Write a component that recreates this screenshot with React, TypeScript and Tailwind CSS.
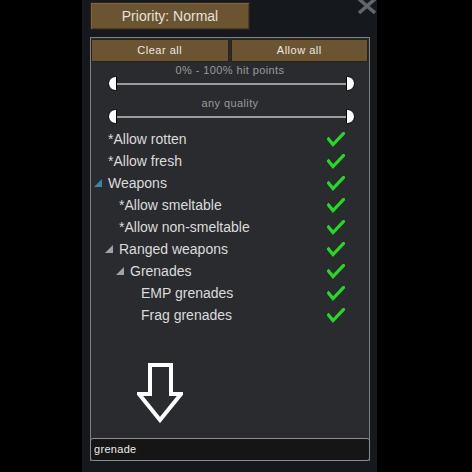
const rows = [
  { label: "*Allow rotten", level: 0, tri: "" },
  { label: "*Allow fresh", level: 0, tri: "" },
  { label: "Weapons", level: 0, tri: "blue" },
  { label: "*Allow smeltable", level: 1, tri: "" },
  { label: "*Allow non-smeltable", level: 1, tri: "" },
  { label: "Ranged weapons", level: 1, tri: "gray" },
  { label: "Grenades", level: 2, tri: "gray" },
  { label: "EMP grenades", level: 3, tri: "" },
  { label: "Frag grenades", level: 3, tri: "" },
]

const indent = ["pl-[3px]", "pl-[14px]", "pl-[25px]", "pl-[36px]"]

const Check = () => (
  <svg width="18" height="15" viewBox="0 0 18 15" className="ml-auto mr-[24px]">
    <polyline points="1.5,7 6,12.5 16.5,1.5" fill="none" stroke="#27d827" strokeWidth="3.2" strokeLinecap="square" />
  </svg>
)

const Slider = () => (
  <div className="flex items-center h-[15px] ml-[17px] mr-[14px]">
    <div className="w-[9px] h-[15px] bg-white rounded-l-full border border-black" />
    <div className="flex-1 h-[2px] bg-[#9c9c9c]" />
    <div className="w-[9px] h-[15px] bg-white rounded-r-full border border-black" />
  </div>
)

export default function App() {
  return (
    <div className="w-[472px] h-[472px] bg-black flex" style={{ fontFamily: '"Liberation Sans", Arial, sans-serif' }}>
      <div className="ml-[82px] w-[295px] h-full bg-[#15191e] relative">
        <svg width="18" height="14" viewBox="0 0 18 14" className="absolute right-[1px] top-0">
          <path d="M1 -1 L17 13 M17 -1 L1 13" stroke="#62656a" strokeWidth="3.5" />
        </svg>

        <div className="ml-[8px] mt-[2px] w-[160px] h-[28px] bg-[#6b5432] border border-[#2a2217] shadow-[inset_1px_1px_0_#7d6440,inset_-1px_-1px_0_#4e3d24] flex items-center justify-center text-[14px] text-[#e4e2dc]">
          Priority: Normal
        </div>

        <div className="ml-[8px] mt-[7px] w-[280px] h-[424px] bg-[#2a2b2e] border-x border-t border-[#808080] flex flex-col">
          <div className="flex gap-[2px] pt-[1px] pr-[1px]">
            <div className="flex-1 h-[23px] bg-[#6b5432] border border-[#2a2217] flex items-center justify-center text-[11px] tracking-[0.5px] text-[#ece8e0]">
              Clear all
            </div>
            <div className="flex-1 h-[23px] bg-[#6b5432] border border-[#2a2217] flex items-center justify-center text-[11px] tracking-[0.5px] text-[#ece8e0]">
              Allow all
            </div>
          </div>

          <div className="mt-[2px] h-[12px] leading-[12px] text-center text-[11px] tracking-[0.4px] text-[#9a9a9a]">0% - 100% hit points</div>
          <Slider />
          <div className="mt-[6px] h-[12px] leading-[12px] text-center text-[11px] tracking-[0.4px] text-[#9a9a9a]">any quality</div>
          <Slider />

          <div className="mt-[4px] flex flex-col">
            {rows.map(r => (
              <div key={r.label} className={`flex items-center h-[22px] ${indent[r.level]}`}>
                <div className="w-[14px] flex items-center">
                  {r.tri && (
                    <svg width="8" height="8" viewBox="0 0 8 8">
                      <polygon points="8,0 8,8 0,8" fill={r.tri === "blue" ? "#3b86a8" : "#a3a3a3"} />
                    </svg>
                  )}
                </div>
                <span className="text-[14px] text-[#dcdcdc]">{r.label}</span>
                <Check />
              </div>
            ))}
          </div>

          <svg width="46" height="60" viewBox="0 0 46 60" className="mt-[37px] ml-[46px]">
            <polygon points="13,2 34,2 34,31 44,31 23,57 2,31 13,31" fill="none" stroke="#ffffff" strokeWidth="4" strokeLinejoin="miter" />
          </svg>

          <div className="flex-1" />

          <div className="-mx-[1px] h-[23px] bg-[#151515] border border-[#8c8c8c] rounded-[3px] flex items-center pl-[3px] text-[11px] tracking-[0.3px] text-[#ececec]">
            grenade
          </div>
        </div>
      </div>
    </div>
  )
}
